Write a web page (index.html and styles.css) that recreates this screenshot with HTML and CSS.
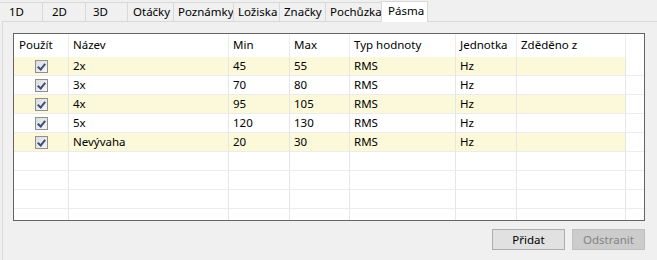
FILE: index.html
```html
<!DOCTYPE html>
<html>
<head>
  <title>Pásma</title>
  <link rel="stylesheet" href="styles.css">
</head>
<body>
  <div class="tabs">
    <div class="tab w43">1D</div>
    <div class="tab w43">2D</div>
    <div class="tab w42 p7">3D</div>
    <div class="tab w46 p5">Otáčky</div>
    <div class="tab w60 p4">Poznámky</div>
    <div class="tab w46 p4">Ložiska</div>
    <div class="tab w46 p4">Značky</div>
    <div class="tab w56 p4">Pochůzka</div>
    <div class="tab active">Pásma</div>
  </div>

  <div class="panel">
    <div class="grid">
      <div class="row head">
        <div class="cell">Použít</div>
        <div class="cell">Název</div>
        <div class="cell">Min</div>
        <div class="cell">Max</div>
        <div class="cell">Typ hodnoty</div>
        <div class="cell">Jednotka</div>
        <div class="cell">Zděděno z</div>
        <div class="cell fill"></div>
      </div>

      <div class="row odd">
        <div class="cell check"><span class="box"></span></div>
        <div class="cell">2x</div>
        <div class="cell">45</div>
        <div class="cell">55</div>
        <div class="cell">RMS</div>
        <div class="cell">Hz</div>
        <div class="cell"></div>
        <div class="cell fill"></div>
      </div>
      <div class="row">
        <div class="cell check"><span class="box"></span></div>
        <div class="cell">3x</div>
        <div class="cell">70</div>
        <div class="cell">80</div>
        <div class="cell">RMS</div>
        <div class="cell">Hz</div>
        <div class="cell"></div>
        <div class="cell fill"></div>
      </div>
      <div class="row odd">
        <div class="cell check"><span class="box"></span></div>
        <div class="cell">4x</div>
        <div class="cell">95</div>
        <div class="cell">105</div>
        <div class="cell">RMS</div>
        <div class="cell">Hz</div>
        <div class="cell"></div>
        <div class="cell fill"></div>
      </div>
      <div class="row">
        <div class="cell check"><span class="box"></span></div>
        <div class="cell">5x</div>
        <div class="cell">120</div>
        <div class="cell">130</div>
        <div class="cell">RMS</div>
        <div class="cell">Hz</div>
        <div class="cell"></div>
        <div class="cell fill"></div>
      </div>
      <div class="row odd">
        <div class="cell check"><span class="box"></span></div>
        <div class="cell">Nevývaha</div>
        <div class="cell">20</div>
        <div class="cell">30</div>
        <div class="cell">RMS</div>
        <div class="cell">Hz</div>
        <div class="cell"></div>
        <div class="cell fill"></div>
      </div>

      <div class="row"><div class="cell"></div><div class="cell"></div><div class="cell"></div><div class="cell"></div><div class="cell"></div><div class="cell"></div><div class="cell"></div><div class="cell fill"></div></div>
      <div class="row"><div class="cell"></div><div class="cell"></div><div class="cell"></div><div class="cell"></div><div class="cell"></div><div class="cell"></div><div class="cell"></div><div class="cell fill"></div></div>
      <div class="row"><div class="cell"></div><div class="cell"></div><div class="cell"></div><div class="cell"></div><div class="cell"></div><div class="cell"></div><div class="cell"></div><div class="cell fill"></div></div>
      <div class="row"><div class="cell"></div><div class="cell"></div><div class="cell"></div><div class="cell"></div><div class="cell"></div><div class="cell"></div><div class="cell"></div><div class="cell fill"></div></div>
    </div>

    <div class="buttons">
      <button class="btn">Přidat</button>
      <button class="btn" disabled>Odstranit</button>
    </div>
  </div>
</body>
</html>
```

FILE: styles.css
```css
body {
  margin: 0;
  background: #f0f0f0;
  font-family: "Noto Sans", "Open Sans", sans-serif;
  font-size: 11.5px;
  color: #000;
  height: 260px;
  overflow: hidden;
}

.tabs {
  display: flex;
  height: 21px;
  align-items: flex-end;
}
.tab {
  box-sizing: border-box;
  height: 19px;
  line-height: 17px;
  padding-left: 9px;
  border: 1px solid #d9d9d9;
  border-left: none;
  border-bottom: none;
  background: #f0f0f0;
  white-space: nowrap;
  overflow: hidden;
}
.tab.active {
  width: 47px;
  height: 21px;
  line-height: 18px;
  background: #fff;
  border-left: 1px solid #d9d9d9;
  margin-left: -1px;
  padding-left: 6px;
  position: relative;
  top: 1px;
}
.w42 { width: 42px; }
.w43 { width: 43px; }
.w46 { width: 46px; }
.w56 { width: 56px; }
.w60 { width: 60px; }
.p7 { padding-left: 7px; }
.p5 { padding-left: 5px; }
.p4 { padding-left: 4px; }

.panel {
  margin-left: 2px;
  border-left: 1px solid #d9d9d9;
  border-top: 1px solid #d9d9d9;
  padding: 11px 0 0 10px;
  height: 240px;
  box-sizing: border-box;
}

.grid {
  box-sizing: border-box;
  width: 632px;
  height: 188px;
  border: 1px solid #646464;
  background: #fff;
  overflow: hidden;
}

.row {
  display: grid;
  grid-template-columns: 55px 160px 61px 60px 106px 61px 109px 1fr;
  height: 19px;
}
.row.head {
  height: 23px;
}
.row.odd .cell {
  background: #fcf8da;
}
.row.odd .cell.fill {
  background: #fff;
}

.cell {
  box-sizing: border-box;
  border-right: 1px solid #e6e6e6;
  border-bottom: 1px solid #ececec;
  padding-left: 4px;
  line-height: 18px;
  white-space: nowrap;
  overflow: hidden;
}
.head .cell {
  border-bottom: none;
  line-height: 22px;
  border-right-color: #ececec;
}
.head .cell:first-child {
  padding-left: 5px;
}
.cell.fill {
  border-right: none;
}
.head .cell.fill {
  border: none;
}

.check {
  padding-left: 0;
  display: flex;
  justify-content: center;
  align-items: center;
}
.box {
  box-sizing: border-box;
  width: 13px;
  height: 13px;
  border: 1px solid #8e8f8f;
  background: linear-gradient(135deg, #dcdcdc, #f6f6f6);
  margin-left: 1px;
  position: relative;
}
.box::after {
  content: "";
  position: absolute;
  left: 3px;
  top: 1px;
  width: 3px;
  height: 6px;
  border-right: 2px solid #3c4f7a;
  border-bottom: 2px solid #3c4f7a;
  transform: rotate(40deg);
}

.buttons {
  width: 632px;
  display: flex;
  justify-content: flex-end;
  gap: 7px;
  margin-top: 8px;
}
.btn {
  box-sizing: border-box;
  width: 73px;
  height: 21px;
  padding: 0;
  font-family: inherit;
  font-size: 11.5px;
  color: #000;
  background: #e1e1e1;
  border: 1px solid #adadad;
  border-radius: 0;
}
.btn:disabled {
  color: #838383;
  background: #cccccc;
  border-color: #bfbfbf;
}
```
